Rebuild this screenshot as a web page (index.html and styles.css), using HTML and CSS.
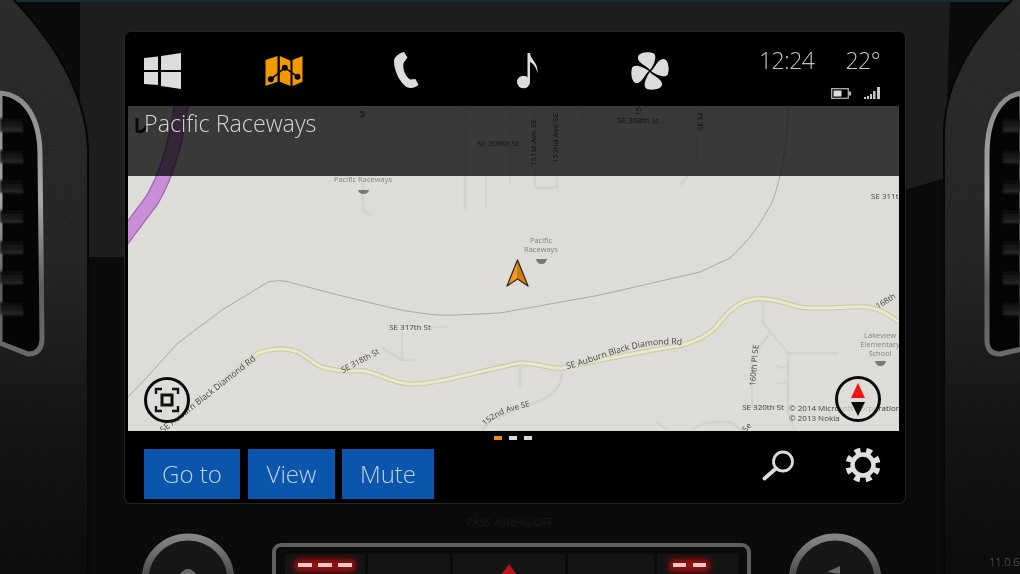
FILE: index.html
```html
<!DOCTYPE html>
<html lang="en">
<head>
    <meta charset="UTF-8">
    <title>Pacific Raceways</title>
    <link rel="stylesheet" href="styles.css">
</head>
<body>
    <!-- dashboard around the screen -->
    <svg class="dash" viewBox="0 0 1020 574" aria-hidden="true">
        <defs>
            <linearGradient id="leather" x1="0" y1="0" x2="0" y2="1">
                <stop offset="0" stop-color="#2e2e2c"/>
                <stop offset="0.45" stop-color="#282826"/>
                <stop offset="0.75" stop-color="#161615"/>
                <stop offset="1" stop-color="#0d0d0d"/>
            </linearGradient>
            <linearGradient id="trim" x1="0" y1="0" x2="0" y2="1">
                <stop offset="0" stop-color="#8a8a88"/>
                <stop offset="0.4" stop-color="#a8a8a8"/>
                <stop offset="0.75" stop-color="#5e5e5e"/>
                <stop offset="1" stop-color="#6a6a6a"/>
            </linearGradient>
            <linearGradient id="knob" x1="0" y1="0" x2="0" y2="1">
                <stop offset="0" stop-color="#858585"/>
                <stop offset="0.5" stop-color="#444"/>
            </linearGradient>
            <linearGradient id="slat" x1="0" y1="0" x2="0" y2="1">
                <stop offset="0" stop-color="#0a0a0a"/>
                <stop offset="0.75" stop-color="#1e1e1e"/>
                <stop offset="1" stop-color="#363636"/>
            </linearGradient>
            <filter id="grain" x="0" y="0" width="100%" height="100%">
                <feTurbulence type="fractalNoise" baseFrequency="0.7" numOctaves="2" seed="4"/>
                <feColorMatrix values="0 0 0 0 0  0 0 0 0 0  0 0 0 0 0  1.6 0 0 0 -0.6"/>
                <feComposite in2="SourceGraphic" operator="in"/>
            </filter>
            <filter id="soft"><feGaussianBlur stdDeviation="0.9"/></filter>
            <filter id="glow" x="-30%" y="-60%" width="160%" height="220%"><feGaussianBlur stdDeviation="3"/></filter>
        </defs>

        <rect width="1020" height="574" fill="#0b0b0b"/>
        <polygon points="80,0 950,0 945,178 905,190 125,257 80,257" fill="#1d1d1d"/>
        <rect width="1020" height="2" fill="#12302f"/>

        <path d="M0 0H14C50 38 86 90 88 150V574H0Z" fill="url(#leather)"/>
        <path d="M1020 0H1012C975 35 946 80 944 130V574H1020Z" fill="url(#leather)"/>
        <path d="M0 0H14C50 38 86 90 88 150V574H0Z" fill="#000" filter="url(#grain)" opacity="0.25"/>
        <path d="M1020 0H1012C975 35 946 80 944 130V574H1020Z" fill="#000" filter="url(#grain)" opacity="0.25"/>
        <path d="M14 0C50 38 86 90 88 150V574" fill="none" stroke="#060606" stroke-width="2"/>
        <path d="M1012 0C975 35 946 80 944 130V574" fill="none" stroke="#060606" stroke-width="2"/>

        <!-- left vent -->
        <path d="M0 93C25 95 40 118 40 155L42 338Q42 354 28 354L0 343Z" fill="#050505" stroke="url(#trim)" stroke-width="5"/>
        <g fill="url(#slat)" filter="url(#soft)">
            <rect y="118" width="23" height="14"/>
            <rect y="150" width="23" height="13"/>
            <rect y="180" width="23" height="13"/>
            <rect y="210" width="23" height="13"/>
            <rect y="241" width="23" height="13"/>
            <rect y="271" width="23" height="13"/>
            <rect y="302" width="23" height="13"/>
        </g>

        <!-- right vent -->
        <path d="M1022 93C1000 96 987 118 987 155V340Q987 354 1000 354L1022 349Z" fill="#050505" stroke="url(#trim)" stroke-width="5"/>
        <g fill="url(#slat)" filter="url(#soft)">
            <rect x="1003" y="118" width="17" height="14"/>
            <rect x="1003" y="150" width="17" height="13"/>
            <rect x="1003" y="180" width="17" height="13"/>
            <rect x="1003" y="210" width="17" height="13"/>
            <rect x="1003" y="241" width="17" height="13"/>
            <rect x="1003" y="271" width="17" height="13"/>
            <rect x="1003" y="302" width="17" height="13"/>
        </g>

        <text class="airbag" x="510" y="526" text-anchor="middle">PASS AIRBAG OFF</text>
        <text class="build" x="989" y="566">11.0.6-</text>

        <!-- knobs -->
        <circle cx="188" cy="580" r="43" fill="#171717" stroke="url(#knob)" stroke-width="7"/>
        <circle cx="835" cy="580" r="43" fill="#171717" stroke="url(#knob)" stroke-width="7"/>
        <path d="M180 574Q188 564 196 574Z" fill="#6a6a6a"/>
        <path d="M827 572L840 566V574Z" fill="#6a6a6a"/>

        <!-- hazard panel -->
        <rect x="274" y="545" width="475" height="60" rx="7" fill="#0a0a0a" stroke="#5e5e5c" stroke-width="4"/>
        <g fill="#141414">
            <rect x="285" y="554" width="80" height="30"/>
            <rect x="368" y="554" width="82" height="30"/>
            <rect x="453" y="554" width="112" height="30"/>
            <rect x="568" y="554" width="86" height="30"/>
            <rect x="657" y="554" width="81" height="30"/>
        </g>
        <rect x="294" y="559" width="62" height="13" rx="5" fill="#9a0d0d" filter="url(#glow)"/>
        <rect x="669" y="559" width="41" height="13" rx="5" fill="#9a0d0d" filter="url(#glow)"/>
        <g fill="#e8c8c8">
            <rect x="298" y="563" width="14" height="4"/>
            <rect x="318" y="563" width="14" height="4"/>
            <rect x="338" y="563" width="14" height="4"/>
            <rect x="673" y="563" width="13" height="4"/>
            <rect x="693" y="563" width="13" height="4"/>
        </g>
        <polygon points="509,564 500,576 518,576" fill="#b81616"/>
    </svg>

    <div class="screen">
        <header class="topbar">
            <nav class="nav">
                <svg class="nav-icon" viewBox="0 0 38 38">
                    <g fill="#dcdcda">
                        <polygon points="1,6 15,4.5 15,18 1,18"/>
                        <polygon points="18,4 38,1 38,18 18,18"/>
                        <polygon points="1,20 15,20 15,33 1,32"/>
                        <polygon points="18,20 38,20 38,37 18,34"/>
                    </g>
                </svg>
                <svg class="nav-icon" viewBox="-0.5 -4 38 38">
                    <g fill="#f09a00">
                        <polygon points="0,4 12,0 12,25.7 0,30"/>
                        <polygon points="14.3,0 25,4.7 25,30 14.3,25.7"/>
                        <polygon points="27,4 37,0 37,25.7 27,30"/>
                    </g>
                    <polyline points="5.3,23.3 19.3,11.7 32,20.7" fill="none" stroke="#000" stroke-width="1.6"/>
                    <circle cx="19.3" cy="11.7" r="3"/>
                    <circle cx="5.3" cy="23.3" r="3"/>
                    <circle cx="32" cy="20.7" r="3"/>
                </svg>
                <svg class="nav-icon" viewBox="-7 0 38 38">
                    <path fill="#dcdcda" d="M10 0L13.5 5.500L9.500 11C8.500 17 11 24 16 27.500L21.500 27L24.500 33C20 36.500 14 37.500 10 33C4 27 0 17 0 9C0 5 5 1 10 0Z"/>
                </svg>
                <svg class="nav-icon" viewBox="-3 0 38 38">
                    <ellipse cx="11.500" cy="30" rx="6.500" ry="6.300" fill="#dcdcda"/>
                    <path fill="#dcdcda" d="M15.500 1H18C18.500 8 27 11 25.500 21.500C24.500 15 21 11.500 18 10V30H15.500Z"/>
                </svg>
                <svg class="nav-icon" viewBox="-19 -19 38 38">
                    <g fill="#dcdcda">
                        <path d="M0 -1C-3 -5 -13 -8 -12 -14C-11 -18.500 -2 -19.500 3 -18C8 -16 4 -6 0 -1Z"/>
                        <path transform="rotate(90)" d="M0 -1C-3 -5 -13 -8 -12 -14C-11 -18.500 -2 -19.500 3 -18C8 -16 4 -6 0 -1Z"/>
                        <path transform="rotate(180)" d="M0 -1C-3 -5 -13 -8 -12 -14C-11 -18.500 -2 -19.500 3 -18C8 -16 4 -6 0 -1Z"/>
                        <path transform="rotate(270)" d="M0 -1C-3 -5 -13 -8 -12 -14C-11 -18.500 -2 -19.500 3 -18C8 -16 4 -6 0 -1Z"/>
                    </g>
                </svg>
            </nav>
            <div class="status">
                <div class="clock">
                    <span>12:24</span>
                    <span>22°</span>
                </div>
                <div class="signals">
                    <svg class="battery" viewBox="0 0 20 11">
                        <rect x="0.7" y="0.7" width="16.6" height="9.6" fill="none" stroke="#bbb" stroke-width="1.2"/>
                        <rect x="2.5" y="2.5" width="8" height="6" fill="#ddd"/>
                        <rect x="18" y="3.5" width="2" height="4" fill="#bbb"/>
                    </svg>
                    <svg class="bars" viewBox="0 0 16 12">
                        <g fill="#c8c8c8">
                            <rect x="0" y="10" width="2" height="2"/>
                            <rect x="3" y="9" width="2" height="3"/>
                            <rect x="6" y="7" width="2" height="5"/>
                            <rect x="9" y="4" width="2.5" height="8"/>
                            <rect x="13" y="0" width="3" height="12"/>
                        </g>
                    </svg>
                </div>
            </div>
        </header>

        <main class="map">
            <svg class="map-canvas" viewBox="128 106 771 325">
                <defs>
                    <path id="road-left" d="M163 433L261 356"/>
                    <path id="road-main" d="M567 369C600 362 640 338 690 346"/>
                    <path id="road-318" d="M343 373L384 351"/>
                    <path id="road-152" d="M485 426C500 412 515 410 535 405"/>
                    <path id="road-168" d="M878 309L899 296"/>
                </defs>
                <rect x="128" y="106" width="771" height="325" fill="#dddcd8"/>

                <!-- purple highway -->
                <path d="M120 243L152 200C165 178 175 150 182 100" fill="none" stroke="#9a6aa8" stroke-width="15"/>
                <path d="M120 243L152 200C165 178 175 150 182 100" fill="none" stroke="#c88fd8" stroke-width="12.5"/>
                <path class="shield" d="M137 118V131Q142 134 147 126"/>

                <!-- side streets -->
                <g class="street">
                    <path d="M363 180V205Q363 214 372 215"/>
                    <path d="M465 106V210"/>
                    <path d="M486 175V208"/>
                    <path d="M465 123H700"/>
                    <path d="M510 106V185"/>
                    <path d="M535 106V185Q535 190 557 187V106"/>
                    <path d="M582 106V122"/>
                    <path d="M600 123V140"/>
                    <path d="M697 106V160Q695 170 680 185"/>
                    <path d="M560 168H633"/>
                    <path d="M382 348L402 360H415"/>
                    <path d="M402 333V360"/>
                    <path d="M430 327H447"/>
                    <path d="M520 367V388"/>
                    <path d="M562 370C562 390 550 398 533 403L490 420L482 431"/>
                    <path d="M763 303V323L788 353V413L795 431"/>
                    <path d="M788 353H838"/>
                    <path d="M770 333L752 357V407"/>
                    <path d="M775 365Q780 368 788 368"/>
                    <path d="M775 383H788"/>
                    <path d="M743 407H783"/>
                    <path d="M657 422L668 431"/>
                    <path d="M692 431Q700 422 715 422H730L743 431"/>
                </g>

                <!-- railway -->
                <path class="rail" d="M128 397C145 380 160 362 178 343L222 310L268 282Q276 280 285 281L338 295L392 308C420 314 440 316 458 315L500 313L600 295L700 272L730 258C750 240 762 222 773 200C783 170 788 140 788 106"/>

                <!-- main road -->
                <path class="road-edge" d="M160 434L258 353C270 349 285 347 298 352C310 358 315 366 325 368C345 373 355 370 365 371C385 376 395 384 412 384C430 384 445 380 458 377C480 372 500 367 520 363C535 362 550 370 563 368C600 360 640 352 683 345C700 340 708 335 715 328C725 316 735 303 750 300C765 296 780 302 800 307C820 310 845 306 867 307C880 308 890 316 899 322"/>
                <path class="road-fill" d="M160 434L258 353C270 349 285 347 298 352C310 358 315 366 325 368C345 373 355 370 365 371C385 376 395 384 412 384C430 384 445 380 458 377C480 372 500 367 520 363C535 362 550 370 563 368C600 360 640 352 683 345C700 340 708 335 715 328C725 316 735 303 750 300C765 296 780 302 800 307C820 310 845 306 867 307C880 308 890 316 899 322"/>

                <!-- labels -->
                <g class="place">
                    <text x="363" y="182" text-anchor="middle">Pacific Raceways</text>
                    <text x="541" y="243" text-anchor="middle">Pacific</text>
                    <text x="541" y="252" text-anchor="middle">Raceways</text>
                    <text x="880" y="338" text-anchor="middle">Lakeview</text>
                    <text x="880" y="347" text-anchor="middle">Elementary</text>
                    <text x="880" y="356" text-anchor="middle">School</text>
                </g>
                <g class="place-icon">
                    <path d="M358 190H369Q368 194 363.500 194Q359 194 358 190Z"/>
                    <path d="M536 259H547Q546 264 541.500 264Q537 264 536 259Z"/>
                    <path d="M875 361H886Q885 366 880.500 366Q876 366 875 361Z"/>
                </g>
                <g class="label">
                    <text x="498" y="146" text-anchor="middle">SE 309th St</text>
                    <text x="638" y="123" text-anchor="middle">SE 308th St</text>
                    <text x="871" y="199">SE 311th St</text>
                    <text x="410" y="330" text-anchor="middle">SE 317th St</text>
                    <text x="763" y="410" text-anchor="middle">SE 320th St</text>
                    <text transform="rotate(-90 536 166)" x="536" y="166">151st Ave SE</text>
                    <text transform="rotate(-90 558 163)" x="558" y="163">152nd Ave SE</text>
                    <text transform="rotate(-90 703 131)" x="703" y="131">SE M</text>
                    <text transform="rotate(-90 641 116)" x="641" y="116">15</text>
                    <text transform="rotate(-90 365 118)" x="365" y="118">M</text>
                    <text transform="rotate(-85 755 386)" x="755" y="386">160th Pl SE</text>
                    <text transform="rotate(-45 747 431)" x="745" y="431">Se</text>
                    <text class="road-name"><textPath href="#road-left">SE Auburn Black Diamond Rd</textPath></text>
                    <text class="road-name"><textPath href="#road-main">SE Auburn Black Diamond Rd</textPath></text>
                    <text><textPath href="#road-318">SE 318th St</textPath></text>
                    <text><textPath href="#road-152">152nd Ave SE</textPath></text>
                    <text><textPath href="#road-168">168th</textPath></text>
                    <text x="789" y="411">© 2014 Microsoft Corporation</text>
                    <text x="789" y="421">© 2013 Nokia</text>
                </g>

                <!-- car position -->
                <defs>
                    <linearGradient id="car" x1="0" y1="0" x2="1" y2="0">
                        <stop offset="0" stop-color="#e8941c"/>
                        <stop offset="0.5" stop-color="#f0a030"/>
                        <stop offset="0.5" stop-color="#c97a12"/>
                        <stop offset="1" stop-color="#e08a18"/>
                    </linearGradient>
                </defs>
                <polygon points="517.500,260 507,286 517.500,279 528,286" fill="url(#car)" stroke="#3a2a10" stroke-width="1.3" stroke-linejoin="round"/>
            </svg>

            <div class="map-title">Pacific Raceways</div>

            <div class="map-btn map-btn-focus">
                <svg viewBox="0 0 40 40">
                    <rect x="15" y="15" width="10" height="10" fill="none" stroke="#111" stroke-width="3"/>
                    <path d="M9 14V9H15M25 9H31V14M31 26V31H25M15 31H9V26" fill="none" stroke="#111" stroke-width="2.400"/>
                </svg>
            </div>
            <div class="map-btn map-btn-compass">
                <svg viewBox="0 0 40 40">
                    <polygon points="20,4 13,19 27,19" fill="#ee1414"/>
                    <polygon points="13,23 27,23 20,37" fill="#0c0c0c"/>
                </svg>
            </div>
        </main>

        <div class="pager">
            <span class="dot dot-active"></span>
            <span class="dot"></span>
            <span class="dot"></span>
        </div>

        <footer class="actions">
            <button class="action action-goto">Go to</button>
            <button class="action action-view">View</button>
            <button class="action action-mute">Mute</button>
            <svg class="tool-search" viewBox="0 0 34 34">
                <circle cx="21" cy="12.500" r="9.500" fill="none" stroke="#dcdcda" stroke-width="2.800"/>
                <path d="M14 19.500L2.500 29.500" fill="none" stroke="#dcdcda" stroke-width="3.800" stroke-linecap="round"/>
            </svg>
            <svg class="tool-gear" viewBox="-18 -18 36 36">
                <circle r="10.500" fill="none" stroke="#e0e0de" stroke-width="4.500"/>
                <circle r="14.500" fill="none" stroke="#e0e0de" stroke-width="6" stroke-dasharray="5.690 5.690" transform="rotate(11.250)"/>
            </svg>
        </footer>
    </div>
</body>
</html>
```

FILE: styles.css
```css
html, body {
    margin: 0;
    height: 574px;
    overflow: hidden;
    background-color: #0b0b0b;
}
body {
    position: relative;
    font-family: "Open Sans", "Noto Sans", sans-serif;
    font-weight: 300;
}
.dash {
    position: absolute;
    left: 0;
    top: 0;
    width: 1020px;
    height: 574px;
}
.airbag {
    font-size: 10px;
    letter-spacing: 0.5px;
    fill: #232323;
}
.build {
    font-size: 11px;
    fill: #6a6a6a;
}

.screen {
    position: relative;
    box-sizing: border-box;
    width: 780px;
    height: 471px;
    margin: 32px 0 0 125px;
    padding: 0 5px 0 3px;
    display: flex;
    flex-direction: column;
    background-color: #000;
    border-radius: 6px;
    box-shadow: 0 0 0 1px #232323;
    filter: blur(0.4px);
}

.topbar {
    display: flex;
    height: 74px;
    flex-shrink: 0;
}
.nav {
    display: flex;
    gap: 84px;
    padding: 20px 0 0 15px;
}
.nav-icon {
    display: block;
    width: 38px;
    height: 38px;
}
.status {
    margin-left: auto;
    padding: 11px 20px 0 0;
    color: #c4c4c2;
}
.clock {
    display: flex;
    justify-content: flex-end;
    gap: 31px;
    font-size: 23px;
    letter-spacing: -0.5px;
    line-height: 34px;
}
.signals {
    display: flex;
    justify-content: flex-end;
    align-items: center;
    gap: 13px;
    margin-top: 10px;
}
.battery {
    display: block;
    width: 20px;
    height: 11px;
}
.bars {
    display: block;
    width: 16px;
    height: 12px;
}

.map {
    position: relative;
    height: 325px;
    flex-shrink: 0;
}
.map-canvas {
    display: block;
    width: 771px;
    height: 325px;
}
.street {
    fill: none;
    stroke: #d3d3ce;
    stroke-width: 2.5;
}
.shield {
    fill: none;
    stroke: #222;
    stroke-width: 3;
}
.rail {
    fill: none;
    stroke: #a9a9a5;
    stroke-width: 1;
}
.road-edge {
    fill: none;
    stroke: #c8c7a8;
    stroke-width: 5;
}
.road-fill {
    fill: none;
    stroke: #e9e8c8;
    stroke-width: 3;
}
.label text {
    font-family: "Open Sans", sans-serif;
    font-weight: 400;
    font-size: 8px;
    fill: #45453f;
}
.label .road-name {
    font-size: 8.7px;
    stroke: #dddcd8;
    stroke-width: 2px;
    paint-order: stroke;
}
.place text {
    font-family: "Open Sans", sans-serif;
    font-weight: 400;
    font-size: 7.5px;
    fill: #85857f;
}
.place-icon {
    fill: #77777a;
}
.map-title {
    position: absolute;
    left: 0;
    top: 0;
    right: 0;
    box-sizing: border-box;
    height: 70px;
    padding: 0 0 0 16px;
    background-color: rgba(0, 0, 0, 0.74);
    color: #d4d4d2;
    font-size: 23.3px;
    line-height: 35px;
}
.map-btn {
    position: absolute;
    box-sizing: border-box;
    width: 46px;
    height: 46px;
    border: 3px solid #0a0a0a;
    border-radius: 50%;
    background-color: rgba(222, 222, 218, 0.72);
}
.map-btn svg {
    display: block;
    width: 40px;
    height: 40px;
}
.map-btn-focus {
    left: 16px;
    top: 271px;
}
.map-btn-compass {
    left: 707px;
    top: 270px;
}

.pager {
    display: flex;
    gap: 7px;
    height: 18px;
    padding: 5px 0 0 366px;
    box-sizing: border-box;
}
.dot {
    width: 8px;
    height: 4px;
    background-color: #d8d8d8;
}
.dot-active {
    background-color: #e8930c;
}

.actions {
    display: flex;
    align-items: flex-start;
    gap: 8px;
    padding-left: 16px;
}
.action {
    box-sizing: border-box;
    height: 50px;
    padding: 0 0 2px;
    border: none;
    background-color: #0b55ad;
    color: #bcd3ec;
    font-family: "Open Sans", "Noto Sans", sans-serif;
    font-weight: 300;
    font-size: 24px;
}
.action-goto { width: 96px; }
.action-view { width: 87px; }
.action-mute { width: 92px; margin-left: -1px; }
.tool-search {
    display: block;
    width: 34px;
    height: 34px;
    margin: 0 0 0 320px;
}
.tool-gear {
    display: block;
    width: 36px;
    height: 36px;
    margin: -2px 0 0 41px;
}
```
